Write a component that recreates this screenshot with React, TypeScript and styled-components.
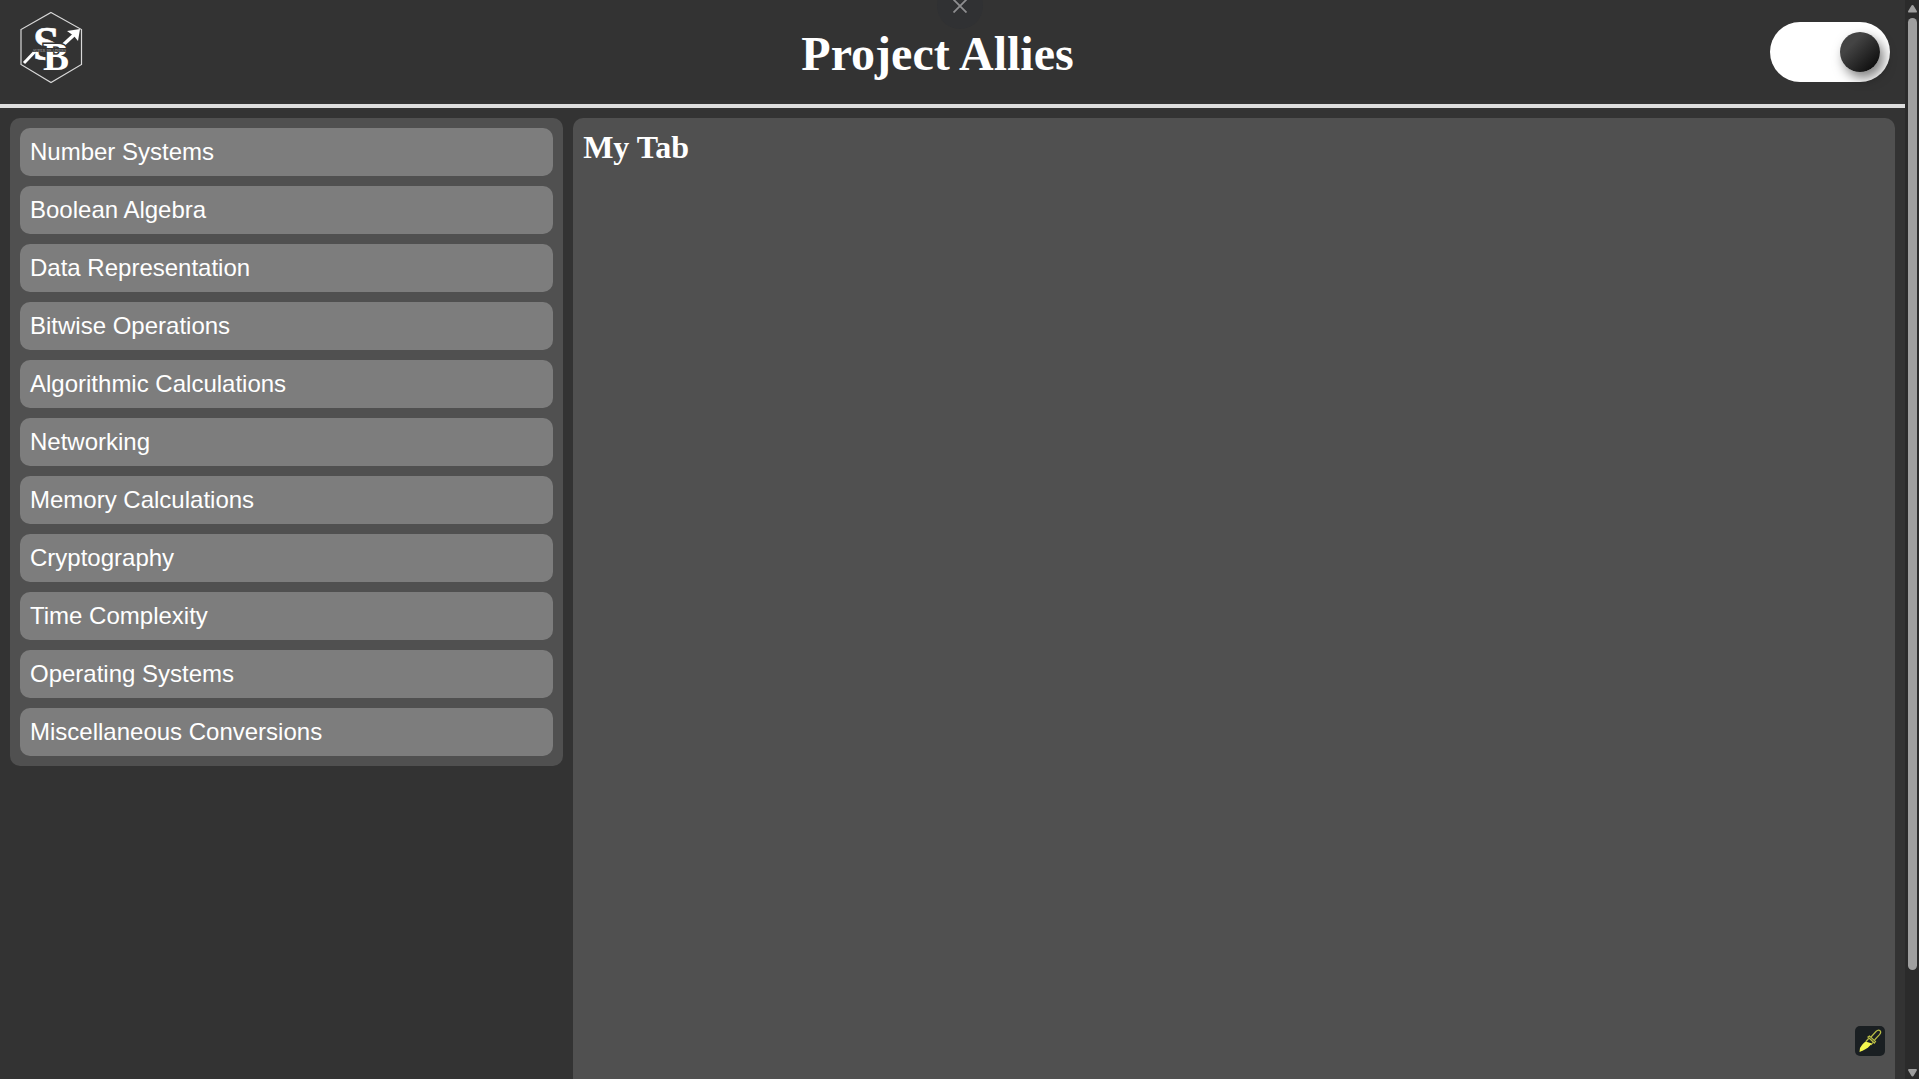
import React, { useState } from "react";
import styled, { createGlobalStyle } from "styled-components";

const GlobalStyle = createGlobalStyle`
  * { box-sizing: border-box; }
  body { margin: 0; background: #333333; color: #ffffff; overflow: hidden; }
`;

const sans = `Arial, "Liberation Sans", sans-serif`;
const serif = `"Times New Roman", "Liberation Serif", serif`;

const Viewport = styled.div`
  display: grid;
  grid-template-columns: minmax(0, 1fr) 14px;
  height: 100vh;
  overflow: hidden;
`;

const Page = styled.div`
  display: flex;
  flex-direction: column;
  min-width: 0;
  height: 100vh;
`;

const Header = styled.header`
  display: flex;
  justify-content: space-between;
  align-items: center;
  height: 108px;
  padding: 0 15px 0 10px;
  border-bottom: 4px solid #dedede;
`;

const LogoLink = styled.a`
  display: block;
  width: 95px;
  height: 104px;
  svg { display: block; width: 100%; height: 100%; }
`;

const Title = styled.h1`
  margin: 0;
  padding-top: 4px;
  font: bold 48px/56px ${serif};
`;

const Toggle = styled.label`
  display: flex;
  align-items: center;
  width: 120px;
  height: 60px;
  padding: 10px;
  border-radius: 30px;
  background: #ffffff;
  cursor: pointer;
`;

const ToggleInput = styled.input`
  appearance: none;
  width: 40px;
  height: 40px;
  margin: 0;
  border-radius: 50%;
  background: linear-gradient(135deg, #444444 30%, #0c0c0c 90%);
  box-shadow: 4px 6px 12px rgba(0, 0, 0, 0.5);
  cursor: pointer;
  transition: margin 0.2s;
  &:checked { margin-left: 60px; }
`;

const Columns = styled.div`
  flex: 1;
  display: grid;
  grid-template-columns: 59fr 141fr;
  gap: 10px;
  align-items: start;
  min-height: 0;
  padding: 10px 10px 0;
`;

const Sidebar = styled.nav`
  display: flex;
  flex-direction: column;
  gap: 10px;
  padding: 10px;
  border-radius: 10px;
  background: #505050;
`;

const TopicButton = styled.button`
  padding: 10px;
  border: 0;
  border-radius: 10px;
  background: #7d7d7d;
  color: #ffffff;
  font: 24px/28px ${sans};
  text-align: left;
  cursor: pointer;
`;

const Content = styled.main`
  align-self: stretch;
  padding: 10px;
  border-radius: 10px 10px 0 0;
  background: #505050;
`;

const TabTitle = styled.h2`
  margin: 0;
  font: bold 32px/38px ${serif};
`;

const Scrollbar = styled.div`
  display: flex;
  flex-direction: column;
  align-items: center;
  padding: 5px 0 2px 1px;
  background: #2b2b2b;
`;

const Arrow = styled.svg`
  display: block;
  flex: none;
  width: 9px;
  height: 8px;
  fill: #9f9f9f;
`;

const Track = styled.div`
  flex: 1;
  width: 9px;
  padding: 5px 0;
`;

const Thumb = styled.div`
  height: 91%;
  border-radius: 5px;
  background: #9f9f9f;
`;

const CloseButton = styled.button`
  position: fixed;
  top: -17px;
  left: 50%;
  display: flex;
  align-items: center;
  justify-content: center;
  width: 46px;
  height: 46px;
  margin-left: -23px;
  padding: 0;
  border: 0;
  border-radius: 50%;
  background: #303133;
  color: #8e8e90;
`;

const PickerButton = styled.button`
  position: fixed;
  right: 34px;
  bottom: 23px;
  width: 30px;
  height: 30px;
  padding: 0;
  border: 0;
  border-radius: 5px;
  background: #1a1f22;
  cursor: pointer;
  svg { display: block; }
`;

const topics = [
  "Number Systems",
  "Boolean Algebra",
  "Data Representation",
  "Bitwise Operations",
  "Algorithmic Calculations",
  "Networking",
  "Memory Calculations",
  "Cryptography",
  "Time Complexity",
  "Operating Systems",
  "Miscellaneous Conversions",
];

function Logo() {
  return (
    <svg viewBox="10 0 95 104" aria-hidden="true">
      <path d="M51 12.500 81.500 29.500V64.500L51 82.500 21 64.500V29.500Z" fill="none" stroke="#d8d8d8" strokeWidth="1.200" />
      <path d="M24 63 35 51.500" stroke="#fff" strokeWidth="3" />
      <path d="M63 45 75 34" stroke="#fff" strokeWidth="3.400" />
      <path d="M80 29 78 41 74 36 67 31Z" fill="#fff" />
      <text x="33" y="60" fontFamily="Liberation Serif" fontWeight="bold" fontSize="48" fill="#fff" stroke="#fff" strokeWidth="0.600">S</text>
      <text x="43" y="70" fontFamily="Liberation Serif" fontWeight="bold" fontSize="39" fill="#fff" stroke="#333" strokeWidth="3" paintOrder="stroke">B</text>
      <path d="M33 48H68V52H33Z" fill="#333" />
      <text x="33" y="52" fontFamily="Liberation Serif" fontSize="4" fill="#aaa">SUPER BRAINERS</text>
    </svg>
  );
}

export default function App() {
  const [dark, setDark] = useState(true);
  return (
    <Viewport>
      <GlobalStyle />
      <Page>
        <Header>
          <LogoLink href="#" aria-label="Home"><Logo /></LogoLink>
          <Title>Project Allies</Title>
          <Toggle>
            <ToggleInput
              type="checkbox"
              aria-label="Dark mode"
              checked={dark}
              onChange={(e) => setDark(e.target.checked)}
            />
          </Toggle>
        </Header>
        <Columns>
          <Sidebar>
            {topics.map((topic) => <TopicButton key={topic} type="button">{topic}</TopicButton>)}
          </Sidebar>
          <Content><TabTitle>My Tab</TabTitle></Content>
        </Columns>
      </Page>
      <Scrollbar aria-hidden="true">
        <Arrow viewBox="0 0 9 8"><path d="M4.500 0C5 0 5.500.4 5.800 1L8.800 6C9.200 7 8.700 7.500 8 7.500H1C.3 7.500-.2 7 .2 6L3.200 1C3.500.4 4 0 4.500 0Z" /></Arrow>
        <Track><Thumb /></Track>
        <Arrow viewBox="0 0 9 8"><path d="M4.500 7.500C5 7.500 5.500 7.100 5.800 6.500L8.800 1.500C9.200.5 8.700 0 8 0H1C.3 0-.2.5.2 1.500L3.200 6.500C3.500 7.100 4 7.500 4.500 7.500Z" /></Arrow>
      </Scrollbar>
      <CloseButton type="button" aria-label="Close">
        <svg width="14" height="14" viewBox="0 0 14 14" fill="none" stroke="currentColor" strokeWidth="1.800"><path d="m.5.5 13 13M13.500.5.5 13.500" /></svg>
      </CloseButton>
      <PickerButton type="button" aria-label="Pick a colour">
        <svg width="30" height="30" viewBox="0 0 30 30" fill="none" stroke="#b9bd45" strokeWidth="1.200">
          <path d="m16 11 5-5.500c1.500-1.500 3-1.800 4-.8s.8 2.500-.5 4L19.500 14" />
          <path d="m13 11 1.500-1 6 5.500-1.200 1.500ZM14 12 11 15.500M18 16.500 16 19" />
          <path d="M10.500 15.500 17 17.500C14.500 20.500 12 22.500 8 24.500L4.500 26 5 22C6.500 19.500 8 17.500 10.500 15.500Z" fill="#f3f64e" stroke="none" />
        </svg>
      </PickerButton>
    </Viewport>
  );
}
